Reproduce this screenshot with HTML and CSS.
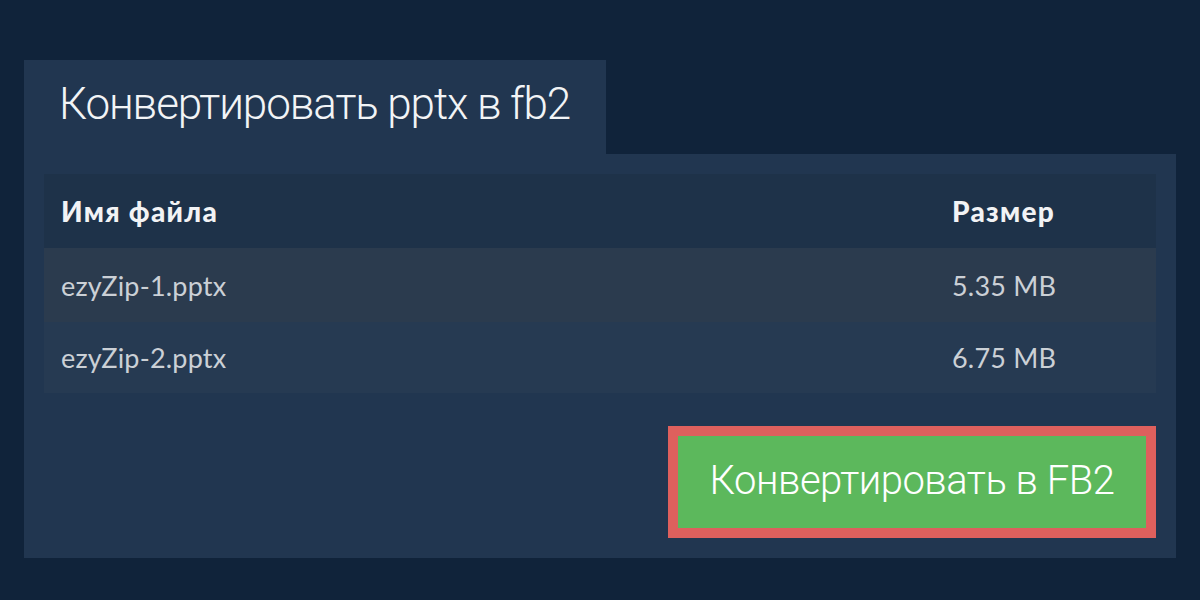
FILE: index.html
```html
<!DOCTYPE html>
<html lang="ru">
<head>
<meta charset="utf-8">
<title>Конвертировать pptx в fb2</title>
<link rel="stylesheet" href="styles.css">
</head>
<body>
<div class="page">
  <div class="tab"><h1 class="title">Конвертировать pptx в fb2</h1></div>
  <div class="panel">
    <div class="table">
      <div class="row head"><div class="name">Имя файла</div><div class="size">Размер</div></div>
      <div class="row odd"><div class="name">ezyZip-1.pptx</div><div class="size">5.35 MB</div></div>
      <div class="row even"><div class="name">ezyZip-2.pptx</div><div class="size">6.75 MB</div></div>
    </div>
    <div class="actions">
      <button class="convert">Конвертировать в FB2</button>
    </div>
  </div>
</div>
</body>
</html>
```
FILE: styles.css
```css
html, body { margin: 0; padding: 0; }
body {
  background: #10233a;
  width: 1200px;
  height: 600px;
  overflow: hidden;
}
.page {
  padding: 60px 24px 0 24px;
}
.tab {
  width: 582px;
  height: 94px;
  background: #213650;
  box-sizing: border-box;
  padding-left: 35px;
  display: flex;
  align-items: center;
}
.title {
  margin: 0;
  font-family: Roboto, "Noto Sans", sans-serif;
  font-weight: 300;
  font-size: 44px;
  color: #f2f4f6;
  letter-spacing: -1.1px;
  line-height: 1;
  padding-bottom: 6px;
}
.panel {
  background: #213650;
  padding: 20px 20px 20px 20px;
  height: 404px;
  box-sizing: border-box;
}
.table {
  display: flex;
  flex-direction: column;
}
.row {
  display: flex;
  align-items: center;
  font-family: Lato, "Noto Sans", sans-serif;
  font-size: 27px;
  letter-spacing: 0.2px;
  padding-left: 17px;
}
.row .name { flex: 1; }
.row .size { width: 204px; }
.head {
  height: 74px;
  background: #1e3249;
  color: #f2f3f5;
  font-weight: 900;
  font-size: 28px;
  letter-spacing: 1.3px;
}
.odd {
  height: 74px;
  background: #2b3b4e;
  color: #cbd0d6;
}
.even {
  height: 71px;
  background: #263a52;
  color: #cbd0d6;
}
.actions {
  display: flex;
  justify-content: flex-end;
  padding-top: 33px;
  padding-right: 0;
}
.convert {
  width: 488px;
  height: 112px;
  background: #5cb85c;
  border: 10px solid #de605d;
  box-sizing: border-box;
  color: #ffffff;
  font-family: Roboto, "Noto Sans", sans-serif;
  font-weight: 300;
  font-size: 40px;
  letter-spacing: -0.5px;
  padding: 0 0 4px 0;
  margin: 0;
  cursor: pointer;
}
```
